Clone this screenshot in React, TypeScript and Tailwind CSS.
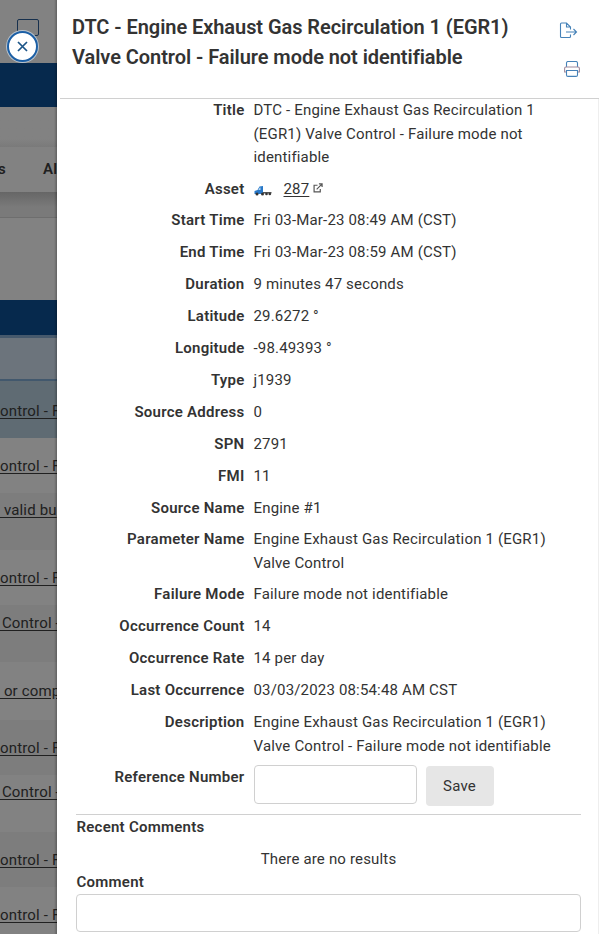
import React from "react";

const details = [
  {
    label: "Title",
    value:
      "DTC - Engine Exhaust Gas Recirculation 1 (EGR1) Valve Control - Failure mode not identifiable",
    height: "h-[79px]",
  },
  { label: "Asset", value: <AssetLink id="287" />, height: "h-[31px]" },
  { label: "Start Time", value: "Fri 03-Mar-23 08:49 AM (CST)" },
  { label: "End Time", value: "Fri 03-Mar-23 08:59 AM (CST)" },
  { label: "Duration", value: "9 minutes 47 seconds" },
  { label: "Latitude", value: "29.6272 °" },
  { label: "Longitude", value: "-98.49393 °" },
  { label: "Type", value: "j1939" },
  { label: "Source Address", value: "0" },
  { label: "SPN", value: "2791" },
  { label: "FMI", value: "11" },
  { label: "Source Name", value: "Engine #1", height: "h-[31px]" },
  {
    label: "Parameter Name",
    value: "Engine Exhaust Gas Recirculation 1 (EGR1) Valve Control",
    height: "h-[55px]",
  },
  { label: "Failure Mode", value: "Failure mode not identifiable" },
  { label: "Occurrence Count", value: "14" },
  { label: "Occurrence Rate", value: "14 per day" },
  { label: "Last Occurrence", value: "03/03/2023 08:54:48 AM CST" },
  {
    label: "Description",
    value:
      "Engine Exhaust Gas Recirculation 1 (EGR1) Valve Control - Failure mode not identifiable",
    height: "h-[55px]",
  },
];

const tableRows = [
  { text: "ontrol - F", className: "h-[57px] pt-[19px] bg-[#5f6b73]" },
  { text: "ontrol - F", className: "h-[55px] pt-[17px] bg-[#828282]" },
  { text: " valid bu", className: "h-[57px] pt-[6px] bg-[#7d7d7d]" },
  { text: "ontrol - F", className: "h-[55px] pt-[17px] bg-[#828282]" },
  { text: " Control -", className: "h-[57px] pt-[7px] -indent-[2px] bg-[#7d7d7d]" },
  { text: " or comp", className: "h-[58px] pt-[18px] bg-[#828282]" },
  { text: "ontrol - F", className: "h-[55px] pt-[17px] bg-[#7d7d7d]" },
  { text: " Control -", className: "h-[57px] pt-[6px] -indent-[2px] bg-[#828282]" },
  { text: "ontrol - F", className: "h-[55px] pt-[17px] bg-[#7d7d7d]" },
  { text: "ontrol - F", className: "h-[55px] pt-[17px] bg-[#828282]" },
];

export default function App() {
  return (
    <div className="relative flex h-[934px] w-[599px] overflow-hidden bg-white font-[Roboto,sans-serif] text-[15px] tracking-[0.17px] text-[#333333]">
      <PageBehind />
      <EventPanel />
      <button
        type="button"
        aria-label="Close"
        className="absolute left-[7px] top-[31px] flex h-[31px] w-[31px] items-center justify-center rounded-full border-2 border-[#1c5fa5] bg-white shadow-[0_0_0_1px_#b9c3cd]"
      >
        <svg width="11" height="11" viewBox="0 0 11 11" stroke="#1c5588" strokeWidth="1.7">
          <path d="M1 1l9 9M10 1l-9 9" />
        </svg>
      </button>
    </div>
  );
}

function PageBehind() {
  return (
    <div className="relative w-[57px] shrink-0 overflow-hidden whitespace-nowrap bg-[#828282] text-[#202020]">
      <div className="h-[63px] pl-[17px] pt-[19px]">
        <div className="h-[17px] w-[22px] rounded-[2px] border border-[#17304d]" />
      </div>
      <div className="h-11 bg-[#06294d]" />
      <div className="h-[40px] bg-gradient-to-b from-[#828282] from-80% to-[#7a7a7a]" />
      <div className="flex h-[45px] items-center bg-[#828282] font-semibold">
        <span className="-ml-[2px] w-[45px] shrink-0">s</span>
        <span>Al</span>
      </div>
      <div className="h-[26px] border-b border-[#6e6e6e] bg-gradient-to-b from-[#666666] to-[#7a7a7a] to-60%" />
      <div className="h-[82px] bg-[#828282]" />
      <div className="h-[35px] bg-[#06294d]" />
      <div className="h-[46px] border-b-2 border-t-[3px] border-b-[#42586d] border-t-[#46596c] bg-[#6c747c]" />
      {tableRows.map((row, i) => (
        <div key={i} className={row.className}>
          <span className="block whitespace-pre leading-[22px] underline underline-offset-2">
            {row.text}
          </span>
        </div>
      ))}
      {/* shadow cast by the panel */}
      <div className="absolute inset-y-0 right-0 w-[3px] bg-gradient-to-r from-transparent to-black/25" />
    </div>
  );
}

function EventPanel() {
  return (
    <div className="flex w-[542px] shrink-0 flex-col">
      <header className="ml-[3px] flex h-[99px] shrink-0 justify-between border-b border-[#d0d0d0] pl-3 pr-[19px] pt-3">
        <h1 className="w-[460px] text-[20px] font-semibold leading-[30px] tracking-[-0.06px]">
          DTC - Engine Exhaust Gas Recirculation 1 (EGR1) Valve Control - Failure
          mode not identifiable
        </h1>
        <div className="flex flex-col items-end gap-[22px] pt-[10px]">
          <ExportIcon />
          <PrintIcon />
        </div>
      </header>

      <div className="grow border-r border-[#eeeeee] pl-[19px] pr-[17px]">
        <dl>
          {details.map((item) => (
            <div
              key={item.label}
              className={`flex gap-[9px] leading-[23.5px] ${item.height ?? "h-8"}`}
            >
              <dt className="w-[168.5px] shrink-0 text-right font-semibold tracking-[0.25px]">
                {item.label}
              </dt>
              <dd className="w-[310px]">{item.value}</dd>
            </div>
          ))}
        </dl>

        <div className="-mt-px flex h-[50px] items-start border-b border-[#d0d0d0]">
          <label className="w-[168.5px] pt-px text-right font-semibold leading-[23.5px] tracking-[0.25px]">
            Reference Number
          </label>
          <input
            type="text"
            className="ml-[9px] h-[39px] w-[163px] rounded-[4px] border border-[#d0d0d0]"
          />
          <button
            type="button"
            className="ml-[9px] mt-px h-10 w-[68px] rounded-[4px] bg-[#e6e6e6]"
          >
            Save
          </button>
        </div>

        <h2 className="pl-[0.5px] font-semibold leading-6 tracking-[0.25px]">Recent Comments</h2>
        <p className="pt-2 text-center leading-6">There are no results</p>
        <h2 className="pl-[0.5px] font-semibold leading-[23px] tracking-[0.25px]">Comment</h2>
        <input
          type="text"
          className="block h-[38px] w-full rounded-[4px] border border-[#d0d0d0]"
        />
      </div>
    </div>
  );
}

function AssetLink({ id }: { id: string }) {
  return (
    <span className="flex items-center">
      <TruckIcon />
      <a className="ml-[12px] underline underline-offset-2">{id}</a>
      <svg className="-mt-[3px] ml-1" width="10" height="10" viewBox="0 0 11 11" fill="none" stroke="#555" strokeWidth="1.3">
        <path d="M5 2.5H1.2V9.8H8V6.5M4 7l5.5-5.5M6.500 1H10v3.500" />
      </svg>
    </span>
  );
}

function TruckIcon() {
  return (
    <svg className="mt-[2px]" width="18" height="12" viewBox="0 0 18 12">
      <path d="M0.500 9V6l3-1 2-3.500L9 1v8z" fill="#2878c8" />
      <path d="M4.300 5l1.400-2.500H6.500V5z" fill="#b8d8f4" />
      <path d="M9 7h8.500v1.500H9z" fill="#555" />
      <g fill="#333">
        <circle cx="3" cy="9" r="1.500" />
        <circle cx="8.500" cy="9" r="1.500" />
        <circle cx="12.500" cy="9" r="1.300" />
        <circle cx="15.800" cy="9" r="1.300" />
      </g>
    </svg>
  );
}

function ExportIcon() {
  return (
    <svg width="19" height="17" viewBox="0 0 19 17" fill="none" stroke="#4682b8" strokeWidth="1.1" className="mr-[2px]">
      <path d="M11.500 12.500v2q0 1-1 1h-8q-1 0-1-1V2q0-1 1-1H7.500l4 4v2.500M7.500 1v4h4M7 10h10.500M14.500 7l3 3-3 3" />
    </svg>
  );
}

function PrintIcon() {
  return (
    <svg width="16" height="16" viewBox="0 0 16 16" fill="none" stroke="#4682b8" strokeWidth="1.1">
      <path d="M2.500 6V2q0-1.500 1.500-1.500h8q1.500 0 1.500 1.500v4" />
      <path d="M2.500 11H.6V7.500Q.6 6 2 6h12q1.400 0 1.400 1.500V11h-1.900" stroke="#a08a9c" />
      <path d="M2.500 9.500h11V14q0 1.400-1.500 1.400H4q-1.500 0-1.500-1.400z" />
    </svg>
  );
}
